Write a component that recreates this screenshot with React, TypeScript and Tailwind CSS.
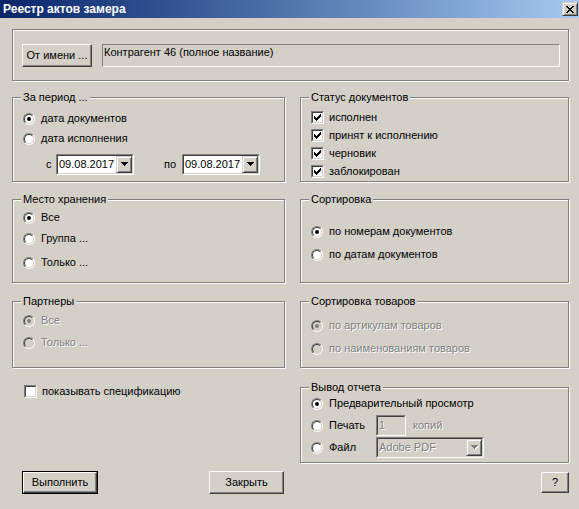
import type { ReactNode } from 'react';

// classic 3D edge presets
const raised =
  'border border-t-white border-l-white border-b-[#404040] border-r-[#404040] shadow-[inset_-1px_-1px_0_#808080] bg-[#d4d0c8]';
const smallRaised =
  'border border-t-[#d4d0c8] border-l-[#d4d0c8] border-b-[#404040] border-r-[#404040] shadow-[inset_1px_1px_0_#fff,inset_-1px_-1px_0_#808080] bg-[#d4d0c8]';
const sunkenOuter = 'border border-t-[#808080] border-l-[#808080] border-b-white border-r-white';
const sunkenInner = 'border border-t-[#404040] border-l-[#404040] border-b-[#d4d0c8] border-r-[#d4d0c8]';
const grayText = 'text-[#808080] [text-shadow:1px_1px_0_#fff]';

function TitleBar() {
  return (
    <div className="flex h-[18px] items-center justify-between bg-linear-to-r from-[#0a246a] to-[#a6caf0] pl-[3px] pr-[1px]">
      <span className="text-[12px] font-bold text-white">Реестр актов замера</span>
      <div className={`flex h-[14px] w-[16px] items-center justify-center ${smallRaised}`}>
        <svg width="8" height="7" viewBox="0 0 8 7" shapeRendering="crispEdges">
          <path
            d="M0 0h2v1h-2zM6 0h2v1h-2zM1 1h2v1h-2zM5 1h2v1h-2zM2 2h4v1h-4zM3 3h2v1h-2zM2 4h4v1h-4zM1 5h2v1h-2zM5 5h2v1h-2zM0 6h2v1h-2zM6 6h2v1h-2z"
            fill="#000"
          />
        </svg>
      </div>
    </div>
  );
}

function Group({ label, className = '', children }: { label?: string; className?: string; children?: ReactNode }) {
  return (
    <div className={`relative border border-[#808080] shadow-[inset_1px_1px_0_#fff,1px_1px_0_#fff] ${className}`}>
      {label && (
        <span className="absolute -top-[7px] left-[8px] bg-[#d4d0c8] px-[2px] leading-[13px]">{label}</span>
      )}
      {children}
    </div>
  );
}

function Radio({ checked, disabled }: { checked?: boolean; disabled?: boolean }) {
  return (
    <span className={`inline-flex h-[12px] w-[12px] shrink-0 rounded-full ${sunkenOuter}`}>
      <span
        className={`flex h-full w-full items-center justify-center rounded-full ${sunkenInner} ${
          disabled ? 'bg-[#d4d0c8]' : 'bg-white'
        }`}
      >
        {checked && <span className={`h-[4px] w-[4px] rounded-full ${disabled ? 'bg-[#808080]' : 'bg-black'}`} />}
      </span>
    </span>
  );
}

function Check({ checked }: { checked?: boolean }) {
  return (
    <span className={`inline-flex h-[13px] w-[13px] shrink-0 ${sunkenOuter}`}>
      <span className={`flex h-full w-full items-center justify-center bg-white ${sunkenInner}`}>
        {checked && (
          <svg width="7" height="7" viewBox="0 0 7 7" shapeRendering="crispEdges">
            <path
              d="M6 0h1v1h-1zM5 1h2v1h-2zM0 2h1v1h-1zM4 2h3v1h-3zM0 3h2v1h-2zM3 3h3v1h-3zM0 4h5v1h-5zM1 5h3v1h-3zM2 6h1v1h-1z"
              fill="#000"
            />
          </svg>
        )}
      </span>
    </span>
  );
}

function Option({
  label,
  checked,
  disabled,
  className = '',
}: {
  label: string;
  checked?: boolean;
  disabled?: boolean;
  className?: string;
}) {
  return (
    <div className={`flex h-[13px] items-center gap-[6px] ${className}`}>
      <Radio checked={checked} disabled={disabled} />
      <span className={disabled ? grayText : ''}>{label}</span>
    </div>
  );
}

function CheckRow({ label, checked, className = '' }: { label: string; checked?: boolean; className?: string }) {
  return (
    <div className={`flex h-[13px] items-center gap-[5px] ${className}`}>
      <Check checked={checked} />
      <span>{label}</span>
    </div>
  );
}

function Arrow({ disabled }: { disabled?: boolean }) {
  return (
    <svg width="8" height="5" viewBox="0 0 8 5" shapeRendering="crispEdges">
      {disabled && <path d="M1 1h7v1h-7zM2 2h5v1h-5zM3 3h3v1h-3zM4 4h1v1h-1z" fill="#fff" />}
      <path d="M0 0h7v1h-7zM1 1h5v1h-5zM2 2h3v1h-3zM3 3h1v1h-1z" fill={disabled ? '#808080' : '#000'} />
    </svg>
  );
}

function Combo({ value, className = '', disabled }: { value: string; className?: string; disabled?: boolean }) {
  return (
    <div className={`h-[21px] ${sunkenOuter} ${className}`}>
      <div className={`flex h-full ${sunkenInner} ${disabled ? 'bg-[#d4d0c8]' : 'bg-white'}`}>
        <span className={`flex-1 pl-[1px] leading-[17px] ${disabled ? grayText : ''}`}>{value}</span>
        <span className={`flex h-full w-[16px] items-center justify-center pl-[1px] ${smallRaised}`}>
          <Arrow disabled={disabled} />
        </span>
      </div>
    </div>
  );
}

function Button({ children, className = '', primary }: { children: ReactNode; className?: string; primary?: boolean }) {
  if (primary) {
    return (
      <div className={`border border-black ${className}`}>
        <div className={`flex h-full items-center justify-center ${raised}`}>{children}</div>
      </div>
    );
  }
  return <div className={`flex items-center justify-center ${raised} ${className}`}>{children}</div>;
}

export default function App() {
  return (
    <div className="h-[509px] w-[579px] overflow-hidden bg-[#d4d0c8] font-['Liberation_Sans',Arial,sans-serif] text-[11px] leading-[13px] text-black">
      <TitleBar />
      <div className="pl-[12px]">
        {/* counterparty */}
        <Group className="mt-[11px] flex h-[52px] w-[557px] items-start gap-[10px] pl-[9px] pr-[8px] pt-[14px]">
          <Button className="h-[23px] w-[70px]">От имени ...</Button>
          <div className="h-[23px] flex-1 border border-t-[#808080] border-l-[#808080] border-b-white border-r-white pl-[1px] pt-[1px]">
            Контрагент 46 (полное название)
          </div>
        </Group>

        <div className="mt-[16px] flex gap-[15px]">
          <Group label="За период ..." className="h-[85px] w-[273px] pl-[10px] pt-[14px]">
            <Option checked label="дата документов" />
            <Option className="mt-[7px]" label="дата исполнения" />
            <div className="mt-[9px] flex items-center">
              <span className="ml-[23px] w-[10px]">с</span>
              <Combo className="w-[78px]" value="09.08.2017" />
              <span className="ml-[30px] w-[18px]">по</span>
              <Combo className="w-[78px]" value="09.08.2017" />
            </div>
          </Group>
          <Group label="Статус документов" className="h-[85px] w-[269px] pl-[10px] pt-[13px]">
            <CheckRow checked label="исполнен" />
            <CheckRow checked className="mt-[5px]" label="принят к исполнению" />
            <CheckRow checked className="mt-[5px]" label="черновик" />
            <CheckRow checked className="mt-[5px]" label="заблокирован" />
          </Group>
        </div>

        <div className="mt-[17px] flex gap-[15px]">
          <Group label="Место хранения" className="h-[84px] w-[273px] pl-[10px] pt-[11px]">
            <Option checked label="Все" />
            <Option className="mt-[8px]" label="Группа ..." />
            <Option className="mt-[11px]" label="Только ..." />
          </Group>
          <Group label="Сортировка" className="h-[84px] w-[269px] pl-[10px] pt-[25px]">
            <Option checked label="по номерам документов" />
            <Option className="mt-[10px]" label="по датам документов" />
          </Group>
        </div>

        <div className="mt-[18px] flex gap-[15px]">
          <Group label="Партнеры" className="h-[67px] w-[273px] pl-[10px] pt-[12px]">
            <Option checked disabled label="Все" />
            <Option disabled className="mt-[9px]" label="Только ..." />
          </Group>
          <Group label="Сортировка товаров" className="h-[67px] w-[269px] pl-[10px] pt-[17px]">
            <Option checked disabled label="по артикулам товаров" />
            <Option disabled className="mt-[10px]" label="по наименованиям товаров" />
          </Group>
        </div>

        <div className="flex items-start gap-[15px]">
          <div className="w-[273px] pl-[12px] pt-[17px]">
            <CheckRow label="показывать спецификацию" />
          </div>
          <Group label="Вывод отчета" className="mt-[19px] h-[76px] w-[269px] pl-[10px] pt-[9px]">
            <Option checked label="Предварительный просмотр" />
            <div className="mt-[5px] flex h-[21px] items-center">
              <Radio />
              <span className="ml-[6px] w-[47px]">Печать</span>
              <div className={`h-[21px] w-[30px] ${sunkenOuter}`}>
                <div className={`h-full bg-[#d4d0c8] pl-[1px] leading-[17px] ${sunkenInner} ${grayText}`}>1</div>
              </div>
              <span className={`ml-[7px] ${grayText}`}>копий</span>
            </div>
            <div className="mt-[1px] flex h-[21px] items-center">
              <Radio />
              <span className="ml-[6px] w-[47px]">Файл</span>
              <Combo className="w-[108px]" value="Adobe PDF" disabled />
            </div>
          </Group>
        </div>

        <div className="mt-[8px] flex gap-[15px]">
          <div className="flex w-[273px] justify-between pl-[10px] pr-[1px]">
            <Button primary className="h-[23px] w-[76px]">
              Выполнить
            </Button>
            <Button className="h-[23px] w-[75px]">Закрыть</Button>
          </div>
          <div className="flex w-[269px] justify-end pt-[1px]">
            <Button className="h-[21px] w-[28px]">?</Button>
          </div>
        </div>
      </div>
    </div>
  );
}
